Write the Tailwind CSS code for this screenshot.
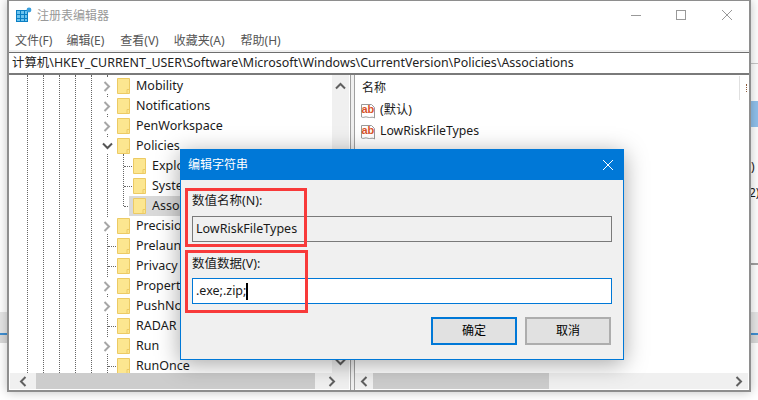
<!DOCTYPE html>
<html lang="zh-CN">
<head>
    <meta charset="UTF-8">
    <title>注册表编辑器</title>
    <script src="https://cdn.jsdelivr.net/npm/@tailwindcss/browser@4"></script>
</head>
<body class="relative w-[758px] h-[400px] overflow-hidden bg-white font-['Noto_Sans','Noto_Sans_CJK_SC',sans-serif] text-[12px] text-[#1a1a1a]">

    <!-- app behind the window -->
    <div class="absolute left-0 top-[312px] w-full h-[21px] bg-[#e6e6e6]"></div>
    <div class="absolute left-0 top-[333px] w-full h-[2px] bg-[#3f8fd2]"></div>
    <div class="absolute left-0 top-[335px] w-full h-[8px] bg-[#d9d9d9]"></div>
    <div class="absolute left-[740px] top-[63px] w-[18px] h-[1px] bg-[#c8c8c8]"></div>
    <div class="absolute left-[740px] top-[101px] w-[18px] h-[26px] bg-[#90c0ec]"></div>
    <div class="absolute left-[740px] top-[263px] w-[18px] h-[2px] bg-[#a0a0a0]"></div>
    <div class="absolute left-[751px] top-[158px] leading-[18px]">)</div>
    <div class="absolute left-[749px] top-[184px] leading-[18px]">2)</div>

    <!-- registry editor window -->
    <div class="absolute left-[7px] top-0 w-[744px] h-[392px] flex flex-col bg-white border-2 border-t border-[#8e8e8e] shadow-[0_0_10px_rgba(0,0,0,0.25)]">
        <!-- title bar -->
        <div class="h-[28px] shrink-0 flex items-center pl-[7px] text-[#999]">
            <svg width="16" height="16" viewBox="0 0 16 16" class="mr-[5px]">
                <rect x="0" y="3" width="12" height="12" fill="#0a7fc4"/>
                <path d="M1 4h3v3H1zM5 4h3v3H5zM9 4h2v3H9zM1 8h3v3H1zM5 8h3v3H5zM9 8h2v3H9zM1 12h3v2H1zM5 12h3v2H5zM9 12h2v2H9z" fill="#6cc3ee"/>
                <circle cx="13" cy="3" r="2.4" fill="#3aa0de"/>
            </svg>
            <span class="mt-[2px]">注册表编辑器</span>
            <div class="ml-auto flex items-center text-[#999]">
                <svg width="12" height="12" viewBox="0 0 12 12" class="mr-[33px]"><path d="M1 6.5h10" stroke="#999" fill="none"/></svg>
                <svg width="12" height="12" viewBox="0 0 12 12" class="mr-[34px]"><rect x="1.5" y="1.5" width="9" height="9" stroke="#999" fill="none"/></svg>
                <svg width="12" height="12" viewBox="0 0 12 12" class="mr-[16px]"><path d="M1 1l10 10M11 1L1 11" stroke="#999" fill="none"/></svg>
            </div>
        </div>
        <!-- menu -->
        <div class="h-[21px] shrink-0 flex items-center pl-[6px] pt-[2px] gap-[14px] text-[#555]">
            <span>文件(F)</span><span>编辑(E)</span><span class="ml-[2px]">查看(V)</span><span class="ml-[1px]">收藏夹(A)</span><span class="ml-[2px]">帮助(H)</span>
        </div>
        <div class="h-[2px] shrink-0 bg-[#f0f0f0]"></div>
        <!-- address bar -->
        <div class="h-[23px] shrink-0 flex items-center pl-[3px] border-t border-b-2 border-t-[#6e6e6e] border-b-[#7a7a7a] whitespace-nowrap text-[12.43px] text-[#222]">计算机\HKEY_CURRENT_USER\Software\Microsoft\Windows\CurrentVersion\Policies\Associations</div>

        <div class="flex-1 flex min-h-0">
            <!-- tree pane -->
            <div class="w-[341px] shrink-0 flex flex-col pr-[1px]">
                <div class="relative h-[298px] overflow-hidden text-[12.5px]">
                    <div class="absolute left-[18px] top-0 h-full border-l border-dotted border-[#666]"></div>
                    <div class="absolute left-[34px] top-0 h-full border-l border-dotted border-[#666]"></div>
                    <div class="absolute left-[50px] top-0 h-full border-l border-dotted border-[#666]"></div>
                    <div class="absolute left-[66px] top-0 h-full border-l border-dotted border-[#666]"></div>
                    <div class="absolute left-[82px] top-0 h-full border-l border-dotted border-[#666]"></div>
                    <div class="absolute left-[98px] top-0 h-full border-l border-dotted border-[#666]"></div>

                    <div class="relative pt-[1px]">
                        <!-- rows -->
                        <div class="h-5 flex items-center pl-[91px]">
                            <span class="w-[14px] h-[16px] bg-white flex items-center justify-center"><svg width="8" height="11" viewBox="0 0 8 11"><path d="M1.5 1l4.5 4.5L1.5 10" stroke="#a6a6a6" stroke-width="2" fill="none"/></svg></span>
                            <svg width="14" height="16" viewBox="0 0 14 16" class="ml-[3px]"><path d="M.5.5h12v15H.5z" fill="#fce690" stroke="#ecca64"/><path d="M10 15.500v-4h2.500" fill="none" stroke="#ecca64"/></svg>
                            <span class="ml-[5px]">Mobility</span>
                        </div>
                        <div class="h-5 flex items-center pl-[91px]">
                            <span class="w-[14px] h-[16px] bg-white flex items-center justify-center"><svg width="8" height="11" viewBox="0 0 8 11"><path d="M1.5 1l4.5 4.5L1.5 10" stroke="#a6a6a6" stroke-width="2" fill="none"/></svg></span>
                            <svg width="14" height="16" viewBox="0 0 14 16" class="ml-[3px]"><path d="M.5.5h12v15H.5z" fill="#fce690" stroke="#ecca64"/><path d="M10 15.500v-4h2.500" fill="none" stroke="#ecca64"/></svg>
                            <span class="ml-[5px]">Notifications</span>
                        </div>
                        <div class="h-5 flex items-center pl-[91px]">
                            <span class="w-[14px] h-[16px] bg-white flex items-center justify-center"><svg width="8" height="11" viewBox="0 0 8 11"><path d="M1.5 1l4.5 4.5L1.5 10" stroke="#a6a6a6" stroke-width="2" fill="none"/></svg></span>
                            <svg width="14" height="16" viewBox="0 0 14 16" class="ml-[3px]"><path d="M.5.5h12v15H.5z" fill="#fce690" stroke="#ecca64"/><path d="M10 15.500v-4h2.500" fill="none" stroke="#ecca64"/></svg>
                            <span class="ml-[5px]">PenWorkspace</span>
                        </div>
                        <div class="h-5 flex items-center pl-[91px]">
                            <span class="w-[14px] h-[16px] bg-white flex items-center justify-center"><svg width="11" height="8" viewBox="0 0 11 8"><path d="M1 1.5l4.5 4.5L10 1.5" stroke="#555" stroke-width="2" fill="none"/></svg></span>
                            <svg width="14" height="16" viewBox="0 0 14 16" class="ml-[3px]"><path d="M.5.5h12v15H.5z" fill="#fce690" stroke="#ecca64"/><path d="M10 15.500v-4h2.500" fill="none" stroke="#ecca64"/></svg>
                            <span class="ml-[5px]">Policies</span>
                        </div>
                        <!-- children of Policies -->
                        <div class="relative">
                            <div class="absolute left-[114px] top-[-2px] h-[52px] border-l border-dotted border-[#666]"></div>
                            <div class="h-5 flex items-center pl-[115px]">
                                <span class="w-[8px] border-t border-dotted border-[#666]"></span>
                                <svg width="14" height="16" viewBox="0 0 14 16" class="ml-[1px]"><path d="M.5.5h12v15H.5z" fill="#fce690" stroke="#ecca64"/><path d="M10 15.500v-4h2.500" fill="none" stroke="#ecca64"/></svg>
                                <span class="ml-[5px]">Explorer</span>
                            </div>
                            <div class="h-5 flex items-center pl-[115px]">
                                <span class="w-[8px] border-t border-dotted border-[#666]"></span>
                                <svg width="14" height="16" viewBox="0 0 14 16" class="ml-[1px]"><path d="M.5.5h12v15H.5z" fill="#fce690" stroke="#ecca64"/><path d="M10 15.500v-4h2.500" fill="none" stroke="#ecca64"/></svg>
                                <span class="ml-[5px]">System</span>
                            </div>
                            <div class="h-5 flex items-center pl-[115px]">
                                <span class="w-[8px] border-t border-dotted border-[#666]"></span>
                                <div class="h-5 flex-1 flex items-center bg-[#d9d9d9] ml-[-3px] pl-[4px]">
                                    <svg width="14" height="16" viewBox="0 0 14 16"><path d="M.5.5h12v15H.5z" fill="#fce690" stroke="#ecca64"/><path d="M10 15.500v-4h2.500" fill="none" stroke="#ecca64"/></svg>
                                    <span class="ml-[5px]">Associations</span>
                                </div>
                            </div>
                        </div>
                        <div class="h-5 flex items-center pl-[91px]">
                            <span class="w-[14px] h-[16px] bg-white flex items-center justify-center"><svg width="8" height="11" viewBox="0 0 8 11"><path d="M1.5 1l4.5 4.5L1.5 10" stroke="#a6a6a6" stroke-width="2" fill="none"/></svg></span>
                            <svg width="14" height="16" viewBox="0 0 14 16" class="ml-[3px]"><path d="M.5.5h12v15H.5z" fill="#fce690" stroke="#ecca64"/><path d="M10 15.500v-4h2.500" fill="none" stroke="#ecca64"/></svg>
                            <span class="ml-[5px]">PrecisionTouchPad</span>
                        </div>
                        <div class="h-5 flex items-center pl-[99px]">
                            <span class="w-[8px] mr-[1px] border-t border-dotted border-[#666]"></span>
                            <svg width="14" height="16" viewBox="0 0 14 16"><path d="M.5.5h12v15H.5z" fill="#fce690" stroke="#ecca64"/><path d="M10 15.500v-4h2.500" fill="none" stroke="#ecca64"/></svg>
                            <span class="ml-[5px]">Prelaunch</span>
                        </div>
                        <div class="h-5 flex items-center pl-[99px]">
                            <span class="w-[8px] mr-[1px] border-t border-dotted border-[#666]"></span>
                            <svg width="14" height="16" viewBox="0 0 14 16"><path d="M.5.5h12v15H.5z" fill="#fce690" stroke="#ecca64"/><path d="M10 15.500v-4h2.500" fill="none" stroke="#ecca64"/></svg>
                            <span class="ml-[5px]">Privacy</span>
                        </div>
                        <div class="h-5 flex items-center pl-[91px]">
                            <span class="w-[14px] h-[16px] bg-white flex items-center justify-center"><svg width="8" height="11" viewBox="0 0 8 11"><path d="M1.5 1l4.5 4.5L1.5 10" stroke="#a6a6a6" stroke-width="2" fill="none"/></svg></span>
                            <svg width="14" height="16" viewBox="0 0 14 16" class="ml-[3px]"><path d="M.5.5h12v15H.5z" fill="#fce690" stroke="#ecca64"/><path d="M10 15.500v-4h2.500" fill="none" stroke="#ecca64"/></svg>
                            <span class="ml-[5px]">PropertySystem</span>
                        </div>
                        <div class="h-5 flex items-center pl-[91px]">
                            <span class="w-[14px] h-[16px] bg-white flex items-center justify-center"><svg width="8" height="11" viewBox="0 0 8 11"><path d="M1.5 1l4.5 4.5L1.5 10" stroke="#a6a6a6" stroke-width="2" fill="none"/></svg></span>
                            <svg width="14" height="16" viewBox="0 0 14 16" class="ml-[3px]"><path d="M.5.5h12v15H.5z" fill="#fce690" stroke="#ecca64"/><path d="M10 15.500v-4h2.500" fill="none" stroke="#ecca64"/></svg>
                            <span class="ml-[5px]">PushNotifications</span>
                        </div>
                        <div class="h-5 flex items-center pl-[99px]">
                            <span class="w-[8px] mr-[1px] border-t border-dotted border-[#666]"></span>
                            <svg width="14" height="16" viewBox="0 0 14 16"><path d="M.5.5h12v15H.5z" fill="#fce690" stroke="#ecca64"/><path d="M10 15.500v-4h2.500" fill="none" stroke="#ecca64"/></svg>
                            <span class="ml-[5px]">RADAR</span>
                        </div>
                        <div class="h-5 flex items-center pl-[91px]">
                            <span class="w-[14px] h-[16px] bg-white flex items-center justify-center"><svg width="8" height="11" viewBox="0 0 8 11"><path d="M1.5 1l4.5 4.5L1.5 10" stroke="#a6a6a6" stroke-width="2" fill="none"/></svg></span>
                            <svg width="14" height="16" viewBox="0 0 14 16" class="ml-[3px]"><path d="M.5.5h12v15H.5z" fill="#fce690" stroke="#ecca64"/><path d="M10 15.500v-4h2.500" fill="none" stroke="#ecca64"/></svg>
                            <span class="ml-[5px]">Run</span>
                        </div>
                        <div class="h-5 flex items-center pl-[99px]">
                            <span class="w-[8px] mr-[1px] border-t border-dotted border-[#666]"></span>
                            <svg width="14" height="16" viewBox="0 0 14 16"><path d="M.5.5h12v15H.5z" fill="#fce690" stroke="#ecca64"/><path d="M10 15.500v-4h2.500" fill="none" stroke="#ecca64"/></svg>
                            <span class="ml-[5px]">RunOnce</span>
                        </div>
                    </div>

                    <!-- vertical scrollbar -->
                    <div class="absolute right-0 top-0 w-[17px] h-full bg-[#f0f0f0] flex flex-col items-center justify-between py-[7px]">
                        <svg width="11" height="8" viewBox="0 0 11 8"><path d="M1 6.5L5.5 2 10 6.5" stroke="#606060" stroke-width="2" fill="none"/></svg>
                        <svg width="11" height="8" viewBox="0 0 11 8"><path d="M1 1.5L5.5 6 10 1.5" stroke="#606060" stroke-width="2" fill="none"/></svg>
                    </div>
                </div>
                <!-- horizontal scrollbar -->
                <div class="h-[16px] ml-[1px] flex bg-[#f0f0f0]">
                    <div class="w-[26px] flex items-center justify-center"><svg width="8" height="11" viewBox="0 0 8 11"><path d="M6.5 1L2 5.5 6.5 10" stroke="#606060" stroke-width="2" fill="none"/></svg></div>
                    <div class="w-[279px] bg-[#cdcdcd]"></div>
                    <div class="flex-1 flex items-center justify-center"><svg width="8" height="11" viewBox="0 0 8 11"><path d="M1.5 1L6 5.5 1.5 10" stroke="#606060" stroke-width="2" fill="none"/></svg></div>
                </div>
            </div>

            <!-- splitter -->
            <div class="w-[5px] shrink-0 bg-[#f0f0f0] border-x border-[#a0a0a0]"></div>

            <!-- value list -->
            <div class="flex-1 min-w-0 flex flex-col text-[12.25px]">
                <div class="h-[22px] shrink-0 relative flex items-center pl-[7px] pt-[3px] text-[12px]">
                    名称
                    <div class="absolute left-[384px] top-[1px] h-[24px] w-[1px] bg-[#e0e0e0]"></div>
                    <div class="absolute left-[391px] top-[9px] h-[8px] border-l border-dotted border-[#8a5a3a]"></div>
                </div>
                <div class="h-[21px] shrink-0 flex items-center pl-[5px] mt-[3px]">
                    <svg width="16" height="16" viewBox="0 0 16 16" class="mr-[4px]">
                        <path d="M1.5 1.5h10l3 3v10.5c-2-1.5-3-.5-5-.5s-3-1-4.500-.5-2.500.5-3.500 0z" fill="#fff" stroke="#9a9a9a"/>
                        <text x="1.500" y="10" font-size="11" font-weight="700" fill="#d8532b" font-family="Liberation Sans">ab</text>
                    </svg>
                    <span>(默认)</span>
                </div>
                <div class="h-[21px] shrink-0 flex items-center pl-[5px]">
                    <svg width="16" height="16" viewBox="0 0 16 16" class="mr-[4px]">
                        <path d="M1.5 1.5h10l3 3v10.5c-2-1.500-3-.5-5-.5s-3-1-4.500-.5-2.500.5-3.500 0z" fill="#fff" stroke="#9a9a9a"/>
                        <text x="1.500" y="10" font-size="11" font-weight="700" fill="#d8532b" font-family="Liberation Sans">ab</text>
                    </svg>
                    <span>LowRiskFileTypes</span>
                </div>
                <div class="mt-auto h-[16px] mb-[1px] flex bg-[#f0f0f0] mr-[1px]">
                    <div class="w-[18px] flex items-center justify-center"><svg width="8" height="11" viewBox="0 0 8 11"><path d="M6.500 1L2 5.500 6.500 10" stroke="#606060" stroke-width="2" fill="none"/></svg></div>
                    <div class="w-[176px] bg-[#cdcdcd]"></div>
                    <div class="flex-1 flex items-center justify-end pr-[5px]"><svg width="8" height="11" viewBox="0 0 8 11"><path d="M1.500 1L6 5.500 1.500 10" stroke="#606060" stroke-width="2" fill="none"/></svg></div>
                </div>
            </div>
        </div>
    </div>

    <!-- edit string dialog -->
    <div class="absolute left-[180px] top-[149px] w-[444px] h-[211px] bg-[#f0f0f0] border border-[#0078d7] shadow-[0_4px_22px_rgba(0,0,0,0.35)]">
        <div class="h-[31px] -mt-[1px] bg-[#0078d7] text-white flex items-center pl-[7px] pr-[9px]">
            <span class="mt-[1px]">编辑字符串</span>
            <svg width="12" height="12" viewBox="0 0 12 12" class="ml-auto"><path d="M1 1l10 10M11 1L1 11" stroke="#fff" fill="none"/></svg>
        </div>
        <div class="pl-[11px] pr-[11px] pt-[12px]">
            <div class="text-[12.5px] leading-[18px]">数值名称(N):</div>
            <div class="h-[26px] mt-[6px] flex items-center pl-[3px] border border-[#7a7a7a] bg-[#f0f0f0] text-[12.5px]">LowRiskFileTypes</div>
            <div class="text-[12.5px] leading-[18px] mt-[13px]">数值数据(V):</div>
            <div class="h-[26px] mt-[5px] flex items-center pl-[3px] border border-[#0078d7] bg-white text-[12.5px]">.exe;.zip;<span class="w-[2px] h-[17px] bg-black"></span></div>
            <div class="flex justify-end gap-2 mt-[13px] mr-[1px]">
                <button class="w-[86px] h-[28px] bg-[#e1e1e1] border-2 border-[#0078d7] text-[12px] text-black">确定</button>
                <button class="w-[86px] h-[28px] bg-[#e1e1e1] border-2 border-[#adadad] text-[12px] text-black">取消</button>
            </div>
        </div>
        <!-- red annotation boxes -->
        <div class="absolute left-[4px] top-[38px] w-[122px] h-[59px] border-[3px] border-[#f83a3a]"></div>
        <div class="absolute left-[4px] top-[100px] w-[123px] h-[63px] border-[3px] border-[#f83a3a]"></div>
    </div>
</body>
</html>
